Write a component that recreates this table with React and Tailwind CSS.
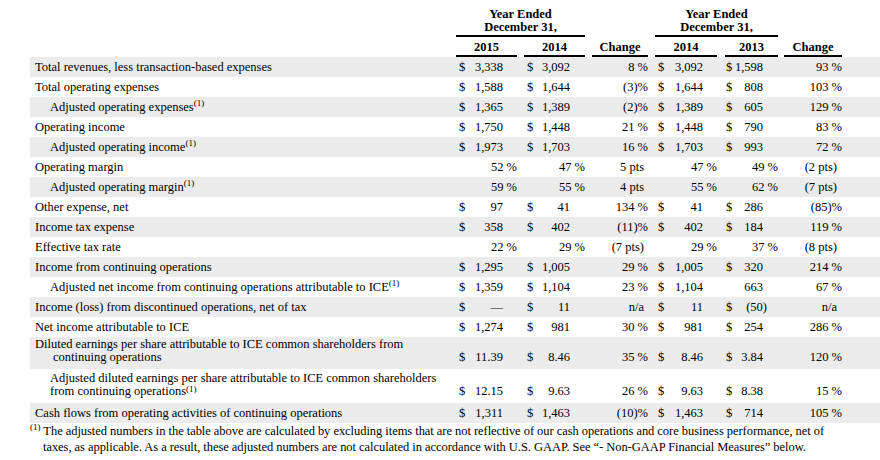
import React from "react";

const GRID = "grid grid-cols-[426px_68px_68px_63px_70px_59px_58px]";

// paddings per money column: $ left pad, value right pad, hanging ")" pad, pct right pad
const moneyCols = {
  0: { pl: "pl-[3px]", pv: "pr-[21px]", ph: "pr-[17px]", pp: "pr-[7px]" },
  1: { pl: "pl-[3px]", pv: "pr-[22px]", ph: "pr-[18px]", pp: "pr-[7px]" },
  3: { pl: "pl-[3px]", pv: "pr-[22px]", ph: "pr-[18px]", pp: "pr-[8px]" },
  4: { pl: "pl-[1px]", pv: "pr-[21px]", ph: "pr-[17px]", pp: "pr-[6px]" },
};

const changeCols = {
  2: { pn: "pr-[7px]", pt: "pr-[11px]" },
  5: { pn: "pr-0", pt: "pr-[5px]" },
};

const rows = [
  { label: "Total revenues, less transaction-based expenses", v: ["$3,338", "$3,092", "8 %", "$3,092", "$1,598", "93 %"] },
  { label: "Total operating expenses", v: ["$1,588", "$1,644", "(3)%", "$1,644", "$808", "103 %"] },
  { label: "Adjusted operating expenses", sub: true, sup: true, v: ["$1,365", "$1,389", "(2)%", "$1,389", "$605", "129 %"] },
  { label: "Operating income", v: ["$1,750", "$1,448", "21 %", "$1,448", "$790", "83 %"] },
  { label: "Adjusted operating income", sub: true, sup: true, v: ["$1,973", "$1,703", "16 %", "$1,703", "$993", "72 %"] },
  { label: "Operating margin", v: ["52 %", "47 %", "5 pts", "47 %", "49 %", "(2 pts)"] },
  { label: "Adjusted operating margin", sub: true, sup: true, v: ["59 %", "55 %", "4 pts", "55 %", "62 %", "(7 pts)"] },
  { label: "Other expense, net", v: ["$97", "$41", "134 %", "$41", "$286", "(85)%"] },
  { label: "Income tax expense", v: ["$358", "$402", "(11)%", "$402", "$184", "119 %"] },
  { label: "Effective tax rate", v: ["22 %", "29 %", "(7 pts)", "29 %", "37 %", "(8 pts)"] },
  { label: "Income from continuing operations", v: ["$1,295", "$1,005", "29 %", "$1,005", "$320", "214 %"] },
  { label: "Adjusted net income from continuing operations attributable to ICE", sub: true, sup: true, v: ["$1,359", "$1,104", "23 %", "$1,104", "663", "67 %"] },
  { label: "Income (loss) from discontinued operations, net of tax", v: ["$—", "$11", "n/a", "$11", "$(50)", "n/a"] },
  { label: "Net income attributable to ICE", v: ["$1,274", "$981", "30 %", "$981", "$254", "286 %"] },
  {
    label: "Diluted earnings per share attributable to ICE common shareholders from",
    second: "continuing operations",
    hang: true,
    h: "h-[32px]",
    v: ["$11.39", "$8.46", "35 %", "$8.46", "$3.84", "120 %"],
  },
  {
    label: "Adjusted diluted earnings per share attributable to ICE common shareholders",
    second: "from continuing operations",
    sub: true,
    sup: true,
    h: "h-[34px]",
    v: ["$12.15", "$9.63", "26 %", "$9.63", "$8.38", "15 %"],
  },
  { label: "Cash flows from operating activities of continuing operations", v: ["$1,311", "$1,463", "(10)%", "$1,463", "$714", "105 %"] },
];

function Sup({ low }) {
  return <sup className={`text-[9px] ${low ? "top-[-3px]" : "top-[-5px]"}`}>(1)</sup>;
}

function MoneyCell({ v, col }) {
  if (v.endsWith("%")) {
    return <div className={`text-right ${col.pp}`}>{v}</div>;
  }
  const dollar = v.startsWith("$");
  const num = dollar ? v.slice(1) : v;
  const pad = num.endsWith(")") ? col.ph : col.pv;
  return (
    <div className={`flex justify-between ${col.pl} ${pad}`}>
      <span>{dollar ? "$" : ""}</span>
      <span>{num}</span>
    </div>
  );
}

function ChangeCell({ v, col }) {
  const soft = v.includes("pts") || v === "n/a";
  return <div className={`text-right ${soft ? col.pt : col.pn}`}>{v}</div>;
}

function Row({ row, gray }) {
  const multi = Boolean(row.second);
  return (
    <div
      className={`${GRID} ${gray ? "bg-[#ececec]" : ""} ${
        multi ? `${row.h} items-end pb-[5px] leading-[13px]` : "h-[20px] items-center leading-[20px]"
      }`}
    >
      <div className={`whitespace-nowrap ${row.sub ? "pl-[20px]" : "pl-[5px]"}`}>
        {row.label}
        {!multi && row.sup && <Sup />}
        {multi && (
          <>
            <br />
            <span className={row.hang ? "pl-[18px]" : ""}>{row.second}</span>
            {row.sup && <Sup low />}
          </>
        )}
      </div>
      {row.v.map((v, i) =>
        changeCols[i] ? (
          <ChangeCell key={i} v={v} col={changeCols[i]} />
        ) : (
          <MoneyCell key={i} v={v} col={moneyCols[i]} />
        ),
      )}
    </div>
  );
}

const years = [
  { t: "2015", pr: "pr-[7px]" },
  { t: "2014", pr: "pr-[7px]" },
  { t: "Change", pr: "pr-[7px]" },
  { t: "2014", pr: "pr-[8px]" },
  { t: "2013", pr: "pr-[6px]" },
  { t: "Change", pr: "pr-0" },
];

function YearEnded() {
  return (
    <div className="border-b-2 border-black pt-[8px] pb-[1px] text-center font-bold leading-[13px]">
      Year Ended
      <br />
      December 31,
    </div>
  );
}

export default function App() {
  return (
    <div className="h-[460px] w-[880px] overflow-hidden bg-white pl-[30px] font-['Liberation_Serif','Times_New_Roman',serif] text-[12.5px] text-black">
      {/* header block */}
      <div className={GRID}>
        <div />
        <div className="col-span-2 pr-[7px]">
          <YearEnded />
        </div>
        <div />
        <div className="col-span-2 pr-[6px]">
          <YearEnded />
        </div>
        <div />
      </div>
      <div className={GRID}>
        <div />
        {years.map((y, i) => (
          <div key={i} className={y.pr}>
            <div className="h-[20px] border-b-2 border-black pt-[2px] text-center font-bold leading-[16px]">
              {y.t}
            </div>
          </div>
        ))}
      </div>

      {rows.map((row, i) => (
        <Row key={i} row={row} gray={i % 2 === 0} />
      ))}

      <p className="pl-[13px] -indent-[13px] leading-[16px] tracking-[-0.05px]">
        <sup className="text-[9px] top-[-5px]">(1)</sup>
        <span className="pl-[3px]">
          The adjusted numbers in the table above are calculated by excluding items that are not reflective of our
          cash operations and core business performance, net of
        </span>
        <br />
        taxes, as applicable. As a result, these adjusted numbers are not calculated in accordance with U.S. GAAP. See
        “- Non-GAAP Financial Measures” below.
      </p>
    </div>
  );
}
